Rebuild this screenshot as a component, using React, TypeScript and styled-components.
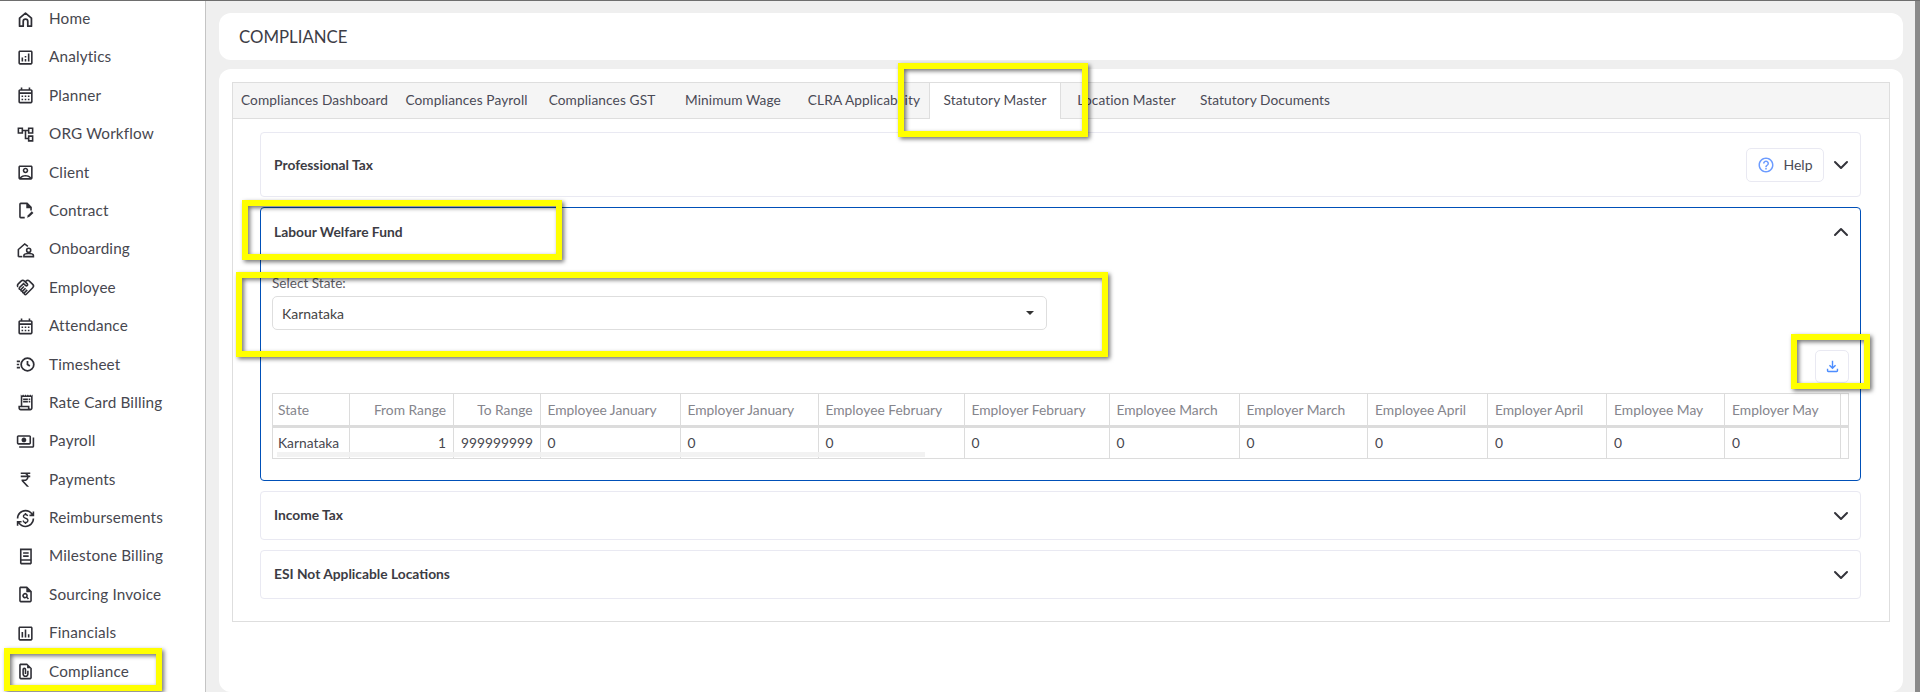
import React from "react";
import styled, { createGlobalStyle } from "styled-components";
import { ChevronDown, ChevronUp } from "lucide-react";
import {
  MdOutlineAnalytics, MdOutlineCalendarMonth, MdOutlineAccountTree, MdOutlineAccountBox,
  MdOutlineReceiptLong, MdOutlinePayments, MdCurrencyRupee, MdOutlineCurrencyExchange,
  MdOutlinePlagiarism, MdOutlineAssessment, MdOutlineFilePresent, MdOutlineHandshake, MdOutlineHelpOutline, MdOutlineFileDownload,
} from "react-icons/md";

const Global = createGlobalStyle`
  html, body { margin: 0; padding: 0; height: 692px; overflow: hidden; background: #efefef; }
  body { font-family: Lato, "Open Sans", sans-serif; color: #444; }
  * { box-sizing: border-box; }
`;

const Page = styled.div`
  position: relative;
  display: flex;
  width: 1920px;
  height: 692px;
  overflow: hidden;
  border-top: 1px solid #6e6e6e;
  background: #efefef;
`;
const Sidebar = styled.nav`
  flex: 0 0 206px;
  background: #fff;
  border-right: 1px solid #c4c4c4;
  display: flex;
  flex-direction: column;
  overflow: hidden;
  > :first-child { margin-top: -1.2px; }
`;
const NavItem = styled.div`
  flex: 0 0 38.4px;
  display: flex;
  align-items: center;
  padding-left: 16px;
  gap: 14px;
  font-size: 15.3px;
  color: #47474f;
  letter-spacing: 0.15px;
  svg { flex: 0 0 19px; width: 19px; height: 19px; color: #2e2e35; }
`;
const NavLabel = styled.span`
  padding-bottom: 2px;
`;
const Main = styled.main`
  flex: 1;
  display: flex;
  flex-direction: column;
  gap: 9px;
  padding: 12px 12px 0 13px;
  min-width: 0;
`;
const Scrollbar = styled.div`
  flex: 0 0 5px;
  background: #8a8a8a;
`;
const TitleCard = styled.header`
  flex: 0 0 47px;
  display: flex;
  align-items: center;
  padding-left: 20px;
  background: #fff;
  border-radius: 12px;
  font-size: 16.8px;
  color: #3d3d46;
`;
const BodyCard = styled.section`
  flex: 1;
  background: #fff;
  border-radius: 12px;
  padding: 13px 13px 0;
`;
const Tabs = styled.div`
  border: 1px solid #dedede;
  height: 540px;
`;
const TabBar = styled.div`
  display: flex;
  height: 36px;
  background: #f5f5f5;
  border-bottom: 1px solid #dedede;
`;
const Tab = styled.div<{ $w: number; $active?: boolean }>`
  flex: 0 0 ${(p) => p.$w}px;
  display: flex;
  align-items: center;
  justify-content: center;
  padding-bottom: 3px;
  font-size: 13.7px;
  letter-spacing: 0.1px;
  white-space: nowrap;
  color: #4a4a55;
  background: ${(p) => (p.$active ? "#fff" : "transparent")};
  border-left: ${(p) => (p.$active ? "1px solid #dedede" : "none")};
  border-right: ${(p) => (p.$active ? "1px solid #dedede" : "none")};
  height: ${(p) => (p.$active ? "36px" : "35px")};
`;
const TabPanel = styled.div`
  display: flex;
  flex-direction: column;
  gap: 10px;
  padding: 13px 28px 0 27px;
`;
const Item = styled.div<{ $open?: boolean }>`
  border: 1px solid ${(p) => (p.$open ? "#0050b8" : "#e9e9f2")};
  border-radius: 4px;
  background: #fff;
`;
const ItemHead = styled.div<{ $h: number }>`
  height: ${(p) => p.$h}px;
  display: flex;
  align-items: center;
  padding: 0 7px 0 13px;
  svg.chev { width: 24px; height: 24px; color: #33333a; margin-left: 5px; }
`;
const ItemTitle = styled.div<{ $lift?: boolean }>`
  flex: 1;
  font-size: 13.8px;
  font-weight: 700;
  color: #3c3c44;
  padding-bottom: ${(p) => (p.$lift ? "2px" : "0")};
`;
const HelpButton = styled.div`
  width: 78px;
  height: 34px;
  display: flex;
  align-items: center;
  justify-content: center;
  gap: 8px;
  border: 1px solid #e9e9f2;
  border-radius: 5px;
  font-size: 14px;
  color: #4a4a55;
  svg { width: 18px; height: 18px; color: #6d9cff; }
`;
const ItemBody = styled.div`
  padding: 19px 11px 21px 11px;
`;
const FieldLabel = styled.div`
  font-size: 13.6px;
  line-height: 16px;
  color: #5c5c64;
  margin-bottom: 5px;
`;
const SelectBox = styled.div`
  width: 775px;
  height: 34px;
  display: flex;
  align-items: center;
  justify-content: space-between;
  padding: 0 12px 0 9px;
  border: 1px solid #dedede;
  border-radius: 5px;
  font-size: 14px;
  color: #444;
`;
const Caret = styled.span`
  width: 0;
  height: 0;
  border-left: 4px solid transparent;
  border-right: 4px solid transparent;
  border-top: 4px solid #333;
`;
const Toolbar = styled.div`
  display: flex;
  justify-content: flex-end;
  margin: 20px 0 10px;
`;
const IconButton = styled.div`
  width: 34px;
  height: 33px;
  display: flex;
  align-items: center;
  justify-content: center;
  border: 1px solid #e9e9f2;
  border-radius: 5px;
  svg { width: 17px; height: 17px; color: #4d8dff; }
`;
const TableWrap = styled.div`
  position: relative;
  overflow: hidden;
  width: 1577px;
  border: 1px solid #dcdcdc;
`;
const Grid = styled.table`
  border-collapse: collapse;
  table-layout: fixed;
  width: 1700px;
  font-size: 13.8px;
`;
const Th = styled.th<{ $right?: boolean }>`
  height: 32px;
  padding: 0 7px;
  font-weight: 400;
  white-space: nowrap;
  overflow: hidden;
  text-align: ${(p) => (p.$right ? "right" : "left")};
  color: #85858c;
  border-right: 1px solid #dcdcdc;
  border-bottom: 3px solid #dcdcdc;
  &:first-child { padding-left: 5px; }
`;
const Td = styled.td<{ $right?: boolean }>`
  height: 32px;
  padding: 0 7px 1px;
  white-space: nowrap;
  text-align: ${(p) => (p.$right ? "right" : "left")};
  color: #47474f;
  border-right: 1px solid #dcdcdc;
  &:first-child { padding-left: 5px; }
`;
const ScrollThumb = styled.div`
  position: absolute;
  left: 4px;
  bottom: 1px;
  width: 648px;
  height: 5px;
  background: #f1f1f1;
  opacity: 0.9;
`;
const Frame = styled.div<{ $x: number; $y: number; $w: number; $h: number }>`
  position: absolute;
  left: ${(p) => p.$x}px;
  top: ${(p) => p.$y}px;
  width: ${(p) => p.$w}px;
  height: ${(p) => p.$h}px;
  border: 6px solid #ffff00;
  filter: drop-shadow(2px 2px 2px rgba(0, 0, 0, 0.55));
  pointer-events: none;
`;

const HomeIcon = () => (
  <svg viewBox="0 0 24 24" fill="none" stroke="currentColor" strokeWidth="2.2" strokeLinejoin="round">
    <path d="M4.5 20.5V10.2L12 4l7.5 6.2v10.3h-4.6v-6a2.9 2.9 0 0 0-5.8 0v6z" />
  </svg>
);
const ContractIcon = () => (
  <svg viewBox="0 0 24 24" fill="none" stroke="currentColor" strokeWidth="2">
    <path d="M11 21H6a1 1 0 0 1-1-1V4a1 1 0 0 1 1-1h8l5 5v4" />
    <path d="M14 3v5h5" fill="currentColor" />
    <path d="M14 21l1-3 5-5 2 2-5 5z" fill="currentColor" stroke="none" />
  </svg>
);
const OnboardingIcon = () => (
  <svg viewBox="0 0 24 24" fill="none" stroke="currentColor" strokeWidth="2">
    <path d="M3 21v-9l8-7 4 3" />
    <path d="M3 21h5" />
    <circle cx="16" cy="13" r="2.6" />
    <path d="M10 21v-1.5c0-1.6 3-2.5 6-2.5s6 .9 6 2.5V21z" />
  </svg>
);
const TimesheetIcon = () => (
  <svg viewBox="0 0 24 24" fill="none" stroke="currentColor" strokeWidth="2.2">
    <circle cx="14.5" cy="12" r="8" />
    <path d="M14.5 7.5V12l3 2" />
    <path d="M1 8h4M1 12h3M1 16h4" />
  </svg>
);
const MilestoneIcon = () => (
  <svg viewBox="0 0 24 24" fill="none" stroke="currentColor" strokeWidth="2">
    <path d="M6 21V3h13v18" />
    <path d="M6 21h13M6 16.5h13" />
    <path d="M9 7.5h7M9 11.5h7" />
  </svg>
);

const nav: [string, React.ReactNode][] = [
  ["Home", <HomeIcon key="a" />],
  ["Analytics", <MdOutlineAnalytics key="a" />],
  ["Planner", <MdOutlineCalendarMonth key="a" />],
  ["ORG Workflow", <MdOutlineAccountTree key="a" />],
  ["Client", <MdOutlineAccountBox key="a" />],
  ["Contract", <ContractIcon key="a" />],
  ["Onboarding", <OnboardingIcon key="a" />],
  ["Employee", <MdOutlineHandshake key="a" />],
  ["Attendance", <MdOutlineCalendarMonth key="a" />],
  ["Timesheet", <TimesheetIcon key="a" />],
  ["Rate Card Billing", <MdOutlineReceiptLong key="a" />],
  ["Payroll", <MdOutlinePayments key="a" />],
  ["Payments", <MdCurrencyRupee key="a" />],
  ["Reimbursements", <MdOutlineCurrencyExchange key="a" />],
  ["Milestone Billing", <MilestoneIcon key="a" />],
  ["Sourcing Invoice", <MdOutlinePlagiarism key="a" />],
  ["Financials", <MdOutlineAssessment key="a" />],
  ["Compliance", <MdOutlineFilePresent key="a" />],
];

const tabs: [string, number][] = [
  ["Compliances Dashboard", 163],
  ["Compliances Payroll", 141],
  ["Compliances GST", 130],
  ["Minimum Wage", 132],
  ["CLRA Applicability", 130],
  ["Statutory Master", 132],
  ["Location Master", 131],
  ["Statutory Documents", 146],
];

const cols: [string, number, string, boolean?][] = [
  ["State", 76, "Karnataka"],
  ["From Range", 104.5, "1", true],
  ["To Range", 86.5, "999999999", true],
  ["Employee January", 140, "0"],
  ["Employer January", 138, "0"],
  ["Employee February", 146, "0"],
  ["Employer February", 145, "0"],
  ["Employee March", 130, "0"],
  ["Employer March", 128.6, "0"],
  ["Employee April", 119.9, "0"],
  ["Employer April", 119.1, "0"],
  ["Employee May", 118, "0"],
  ["Employer May", 116.4, "0"],
  ["Employee June", 132, "0"],
];

export default function App() {
  return (
    <Page>
      <Global />
      <Sidebar>
        {nav.map(([label, icon]) => (
          <NavItem key={label}>
            {icon}
            <NavLabel>{label}</NavLabel>
          </NavItem>
        ))}
      </Sidebar>
      <Main>
        <TitleCard>COMPLIANCE</TitleCard>
        <BodyCard>
          <Tabs>
            <TabBar>
              {tabs.map(([label, w]) => (
                <Tab key={label} $w={w} $active={label === "Statutory Master"}>
                  {label}
                </Tab>
              ))}
            </TabBar>
            <TabPanel>
              <Item>
                <ItemHead $h={63}>
                  <ItemTitle>Professional Tax</ItemTitle>
                  <HelpButton>
                    <MdOutlineHelpOutline />
                    Help
                  </HelpButton>
                  <ChevronDown className="chev" />
                </ItemHead>
              </Item>
              <Item $open>
                <ItemHead $h={48}>
                  <ItemTitle $lift>Labour Welfare Fund</ItemTitle>
                  <ChevronUp className="chev" />
                </ItemHead>
                <ItemBody>
                  <FieldLabel>Select State:</FieldLabel>
                  <SelectBox>
                    Karnataka
                    <Caret />
                  </SelectBox>
                  <Toolbar>
                    <IconButton>
                      <MdOutlineFileDownload />
                    </IconButton>
                  </Toolbar>
                  <TableWrap>
                    <Grid>
                      <colgroup>
                        {cols.map(([h, w]) => (
                          <col key={h} width={w} />
                        ))}
                      </colgroup>
                      <thead>
                        <tr>
                          {cols.map(([h, , , right]) => (
                            <Th key={h} $right={right}>{h}</Th>
                          ))}
                        </tr>
                      </thead>
                      <tbody>
                        <tr>
                          {cols.map(([h, , v, right]) => (
                            <Td key={h} $right={right}>{v}</Td>
                          ))}
                        </tr>
                      </tbody>
                    </Grid>
                    <ScrollThumb />
                  </TableWrap>
                </ItemBody>
              </Item>
              <Item>
                <ItemHead $h={47}>
                  <ItemTitle $lift>Income Tax</ItemTitle>
                  <ChevronDown className="chev" />
                </ItemHead>
              </Item>
              <Item>
                <ItemHead $h={47}>
                  <ItemTitle $lift>ESI Not Applicable Locations</ItemTitle>
                  <ChevronDown className="chev" />
                </ItemHead>
              </Item>
            </TabPanel>
          </Tabs>
        </BodyCard>
      </Main>
      <Scrollbar />
      <Frame $x={4} $y={647} $w={158} $h={43} />
      <Frame $x={898} $y={62} $w={190} $h={74} />
      <Frame $x={242} $y={199} $w={320} $h={60} />
      <Frame $x={236} $y={271} $w={872} $h={85} />
      <Frame $x={1791} $y={333} $w={79} $h={55} />
    </Page>
  );
}
